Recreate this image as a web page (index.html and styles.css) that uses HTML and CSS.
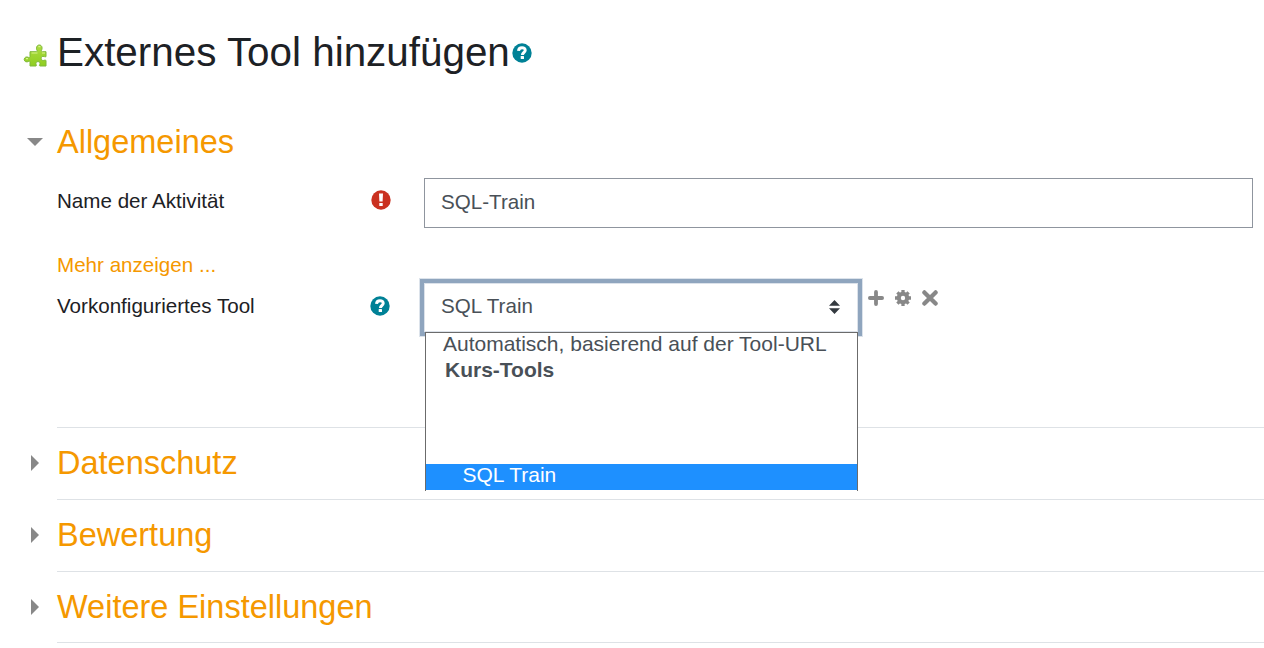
FILE: index.html
```html
<!DOCTYPE html>
<html lang="de">
<head>
<meta charset="utf-8">
<title>Externes Tool hinzufügen</title>
<link rel="stylesheet" href="styles.css">
</head>
<body>
<svg class="defs" aria-hidden="true">
  <symbol id="help" viewBox="0 0 20 20">
    <circle cx="10" cy="10" r="9.7"/>
    <path d="M6.500 7.800C6.700 5.800 8 4.700 10 4.700S13.300 5.800 13.200 7.500C13.100 9.600 10.400 9.400 10.400 11.900" fill="none" stroke="#fff" stroke-width="3"/>
    <rect x="8.700" y="13" width="3.300" height="3.100" rx=".5" fill="#fff"/>
  </symbol>
</svg>
<main class="page">
  <header class="title">
    <svg class="puzzle" viewBox="0 0 24 24">
      <defs><linearGradient id="green" x1="0" y1="0" x2="0" y2="1"><stop offset="0" stop-color="#addc42"/><stop offset="1" stop-color="#8fce20"/></linearGradient></defs>
      <path d="M7 8.700h6.200c.7 0 1.300-.5.8-1.300C12.900 5.500 13.500 2 16.300 2s3.400 3.300 2.200 5.200c-.4.800 0 1.500.9 1.500h3.600v4.700c-.4.800-1 .5-1.600.2-2.400-1-3.300.7-3.200 2 .1 1.600 1.600 2.300 3 1.700.8-.4 1.500-.4 1.800.4v5.300h-6.200c-.6-.5-.4-1.100 0-1.700.7-1.400-.3-2.700-1.800-2.700s-2.600 1.200-1.900 2.700c.3.600.5 1.200 0 1.700H7v-3.800c0-.9-.6-1.200-1.300-.8-2 1.100-4.500.3-4.500-1.900s2.300-3.200 4.400-2.100c.8.400 1.400 0 1.400-.9z" fill="url(#green)" stroke="#7fb83a" stroke-width="1"/>
      <path d="M8.500 10h6M15.400 3.700h2M19 10h3M3 15.600h2" stroke="#d8f38c" stroke-width="1.200"/>
    </svg>
    <h1>Externes Tool hinzufügen</h1>
    <svg class="help"><use href="#help"/></svg>
  </header>

  <section class="general">
    <h2 class="heading"><svg class="caret down" viewBox="0 0 16 8"><path d="M0 0h16L8 8z"/></svg>Allgemeines</h2>
    <div class="row name-row">
      <label for="name">Name der Aktivität</label>
      <svg class="required" viewBox="0 0 20 20"><circle cx="10" cy="10" r="9.700"/><path d="M8 3.500h4l-.4 8.100H8.400zM8.300 13h3.400v3.100H8.300z" fill="#fff"/></svg>
      <input id="name" class="field" type="text" value="SQL-Train">
    </div>
    <a class="more">Mehr anzeigen ...</a>
    <div class="row tool-row">
      <span class="label">Vorkonfiguriertes Tool</span>
      <svg class="help"><use href="#help"/></svg>
      <div class="select">
        <span>SQL Train</span>
        <svg class="sort" viewBox="0 0 11 14"><path d="M0 5.800 5.500 0 11 5.800zM0 8.200h11L5.500 14z"/></svg>
        <ul class="options">
          <li class="auto">Automatisch, basierend auf der Tool-URL</li>
          <li class="group">Kurs-Tools</li>
          <li class="selected">SQL Train</li>
        </ul>
      </div>
      <div class="actions">
        <svg viewBox="0 0 16 16"><path d="M8 1.900v12.200M1.900 8h12.200" stroke-width="3.800" stroke-linecap="round"/></svg>
        <svg viewBox="0 0 16 16"><circle cx="8" cy="8" r="4.200" stroke-width="4"/><path d="M8 0v3M8 13v3M0 8h3M13 8h3M2.400 2.400l2 2M11.600 11.600l2 2M2.400 13.600l2-2M11.600 4.400l2-2" stroke-width="3.300"/></svg>
        <svg viewBox="0 0 16 16"><path d="m2.400 2.400 11.200 11.200M13.600 2.400 2.400 13.600" stroke-width="4.300" stroke-linecap="round"/></svg>
      </div>
    </div>
  </section>

  <section class="collapsed"><h2 class="heading"><svg class="caret" viewBox="0 0 8 16"><path d="M0 0v16l8-8z"/></svg>Datenschutz</h2></section>
  <section class="collapsed"><h2 class="heading"><svg class="caret" viewBox="0 0 8 16"><path d="M0 0v16l8-8z"/></svg>Bewertung</h2></section>
  <section class="collapsed last"><h2 class="heading"><svg class="caret" viewBox="0 0 8 16"><path d="M0 0v16l8-8z"/></svg>Weitere Einstellungen</h2></section>
</main>
</body>
</html>
```

FILE: styles.css
```css
* { box-sizing: border-box; }
body {
  margin: 0;
  height: 648px;
  overflow: hidden;
  background: #fff;
  color: #1d2125;
  font: 20.6px/30px "Liberation Sans", Arial, sans-serif;
}
.defs { position: absolute; width: 0; height: 0; }
svg { display: block; flex: none; }
h1, h2 { margin: 0; font-weight: 400; }
.page { padding: 28px 0 0 57px; }
.title { display: flex; align-items: center; height: 48px; margin-left: -34px; }
.puzzle { width: 24px; height: 24px; margin: 6px 10px 0 0; }
h1 { font-size: 40.4px; line-height: 48px; white-space: nowrap; }
.help { width: 20px; height: 20px; fill: #008196; }
.title .help { margin: 2px 0 0 2px; }
.general { height: 351px; padding-top: 46px; }
.heading {
  display: flex;
  align-items: center;
  height: 40px;
  margin-left: -26px;
  color: #f59800;
  font-size: 32.5px;
  line-height: 40px;
}
.caret { width: 8px; height: 16px; margin-right: 18px; fill: #888; }
.caret.down { width: 16px; height: 8px; margin: 0 14px 0 -4px; }
.row { display: flex; align-items: flex-start; }
.row > label, .row > .label { width: 314px; }
.name-row { margin-top: 16px; }
.name-row > label { padding-top: 8px; }
.required { width: 20px; height: 20px; margin-top: 12px; fill: #ca3120; }
.field {
  width: 829px;
  height: 50px;
  margin-left: 33px;
  padding: 0 16px 2px;
  border: 1px solid #8f959e;
  border-radius: 0;
  color: #495057;
  font: inherit;
}
.more { display: block; width: max-content; margin-top: 22px; color: #f59800; }
.tool-row .label { padding-top: 11px; }
.tool-row .help { margin: 16px 0 0 -1px; }
.select {
  position: relative;
  display: flex;
  align-items: center;
  justify-content: space-between;
  width: 432px;
  height: 47px;
  margin: 4px 0 0 35px;
  padding: 0 17px 0 16px;
  box-shadow: 0 0 0 1px #dce2ea, 0 0 0 5px #8fa5be, 0 0 0 6px #dce3eb;
  color: #495057;
}
.select > span { margin-top: -4px; }
.sort { width: 11px; height: 14px; margin-top: -1px; fill: #343a40; }
.options {
  position: absolute;
  top: 48px;
  left: 0;
  width: 433px;
  height: 159px;
  margin: 0;
  padding: 0;
  border: solid #6b6b6b;
  border-width: 1px 1px 0;
  background: #fff;
  list-style: none;
  font-size: 21px;
  white-space: nowrap;
}
.options li { height: 26px; line-height: 21px; }
.auto { padding-left: 17px; }
.group { padding-left: 19px; font-weight: 700; }
.options .selected { margin-top: 79px; padding-left: 36.5px; background: #1e90ff; color: #fff; }
.actions { display: flex; gap: 11px; margin: 10px 0 0 11px; }
.actions svg { width: 16px; height: 16px; fill: none; stroke: #888; }
.collapsed { height: 72px; padding-top: 15px; border-top: 1px solid #dee2e6; }
.last { border-bottom: 1px solid #dee2e6; }
```
